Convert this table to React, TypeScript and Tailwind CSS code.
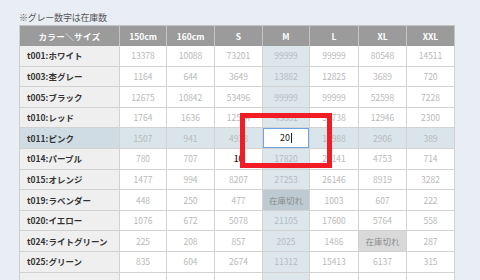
import React from 'react';

type Cell = string | { v: string; kind: 'input' | 'black' | 'out' };

const cols = ['150cm', '160cm', 'S', 'M', 'L', 'XL', 'XXL'];

const rows: { name: string; cells: Cell[] }[] = [
  { name: 't001:ホワイト', cells: ['13378', '10088', '73201', '99999', '99999', '80548', '14511'] },
  { name: 't003:杢グレー', cells: ['1164', '644', '3649', '13882', '12825', '3689', '720'] },
  { name: 't005:ブラック', cells: ['12675', '10842', '53496', '99999', '99999', '52598', '7228'] },
  { name: 't010:レッド', cells: ['1764', '1636', '12534', '43881', '53738', '12946', '2300'] },
  { name: 't011:ピンク', cells: ['1507', '941', '4938', { v: '20', kind: 'input' }, '10988', '2906', '389'] },
  { name: 't014:パープル', cells: ['780', '707', { v: '10', kind: 'black' }, '17820', '21141', '4753', '714'] },
  { name: 't015:オレンジ', cells: ['1477', '994', '8207', '27253', '26146', '8919', '3282'] },
  { name: 't019:ラベンダー', cells: ['448', '250', '477', { v: '在庫切れ', kind: 'out' }, '1003', '607', '222'] },
  { name: 't020:イエロー', cells: ['1076', '672', '5078', '21105', '17600', '5764', '558'] },
  { name: 't024:ライトグリーン', cells: ['225', '208', '857', '2025', '1486', { v: '在庫切れ', kind: 'out' }, '287'] },
  { name: 't025:グリーン', cells: ['835', '604', '2674', '11312', '15413', '6137', '315'] },
  { name: '', cells: ['', '', '', '', '', '', ''] },
];

export default function App() {
  return (
    <div
      className="relative w-[480px] h-[280px] overflow-hidden bg-[#e9eef5] pl-[19px] pt-[11px]"
      style={{ fontFamily: '"Noto Sans CJK JP", "Noto Sans", sans-serif' }}
    >
      <div className="text-[9px] leading-[14px] text-[#555] tracking-tight">※グレー数字は在庫数</div>
      <div className="grid grid-cols-[100px_47px_48px_48px_47px_49px_48px_48px] border-l border-[#cfcfcf] w-max">
        <div className="h-[21px] bg-[#9b9b9b] border-t border-r border-[#c4c4c4] flex items-center justify-center text-[8.5px] font-bold text-white tracking-wider">
          カラー＼サイズ
        </div>
        {cols.map((c) => (
          <div
            key={c}
            className="h-[21px] bg-[#9b9b9b] border-t border-r border-[#c4c4c4] flex items-center justify-center text-[8.5px] font-bold text-white"
          >
            {c}
          </div>
        ))}
        {rows.map((r, ri) => {
          const hl = ri === 4;
          return (
            <React.Fragment key={ri}>
              <div
                className={`h-[20.6px] border-r border-b border-[#d2d2d2] flex items-center pl-[7px] text-[8.5px] font-bold text-[#333] ${
                  hl ? 'bg-[#cfdce3]' : 'bg-[#efefef]'
                }`}
              >
                {r.name}
              </div>
              {r.cells.map((c, ci) => {
                const isM = ci === 3;
                let bg = 'bg-white';
                if (hl) bg = 'bg-[#dae5eb]';
                else if (isM) bg = 'bg-[#dce6eb]';
                const v = typeof c === 'string' ? c : c.v;
                const kind = typeof c === 'string' ? '' : c.kind;
                if (kind === 'input') {
                  return (
                    <div key={ci} className={`h-[20.6px] border-r border-b border-[#d2d2d2] ${bg}`}>
                      <div className="h-full w-full bg-white border border-[#6ea3ea] flex items-center justify-center text-[9px] text-[#222]">
                        <span>{v}</span>
                        <span className="inline-block w-px h-[10px] bg-[#222] ml-[1px]" />
                      </div>
                    </div>
                  );
                }
                let cls = 'text-[#b9b9b9]';
                if (isM && !hl) cls = 'text-[#b3bec4]';
                if (kind === 'black') cls = 'text-[#111] font-medium';
                if (kind === 'out') {
                  cls = 'text-[#8a8a8a]';
                  bg = isM ? 'bg-[#bccad1]' : 'bg-[#d9d9d9]';
                }
                return (
                  <div
                    key={ci}
                    className={`h-[20.6px] border-r border-b border-[#d2d2d2] flex items-center justify-center text-[8.5px] ${bg} ${cls}`}
                  >
                    {v}
                  </div>
                );
              })}
            </React.Fragment>
          );
        })}
      </div>
      <div className="absolute left-[240px] top-[113px] w-[92px] h-[55px] border-[5px] border-[#f21c24]" />
    </div>
  );
}
